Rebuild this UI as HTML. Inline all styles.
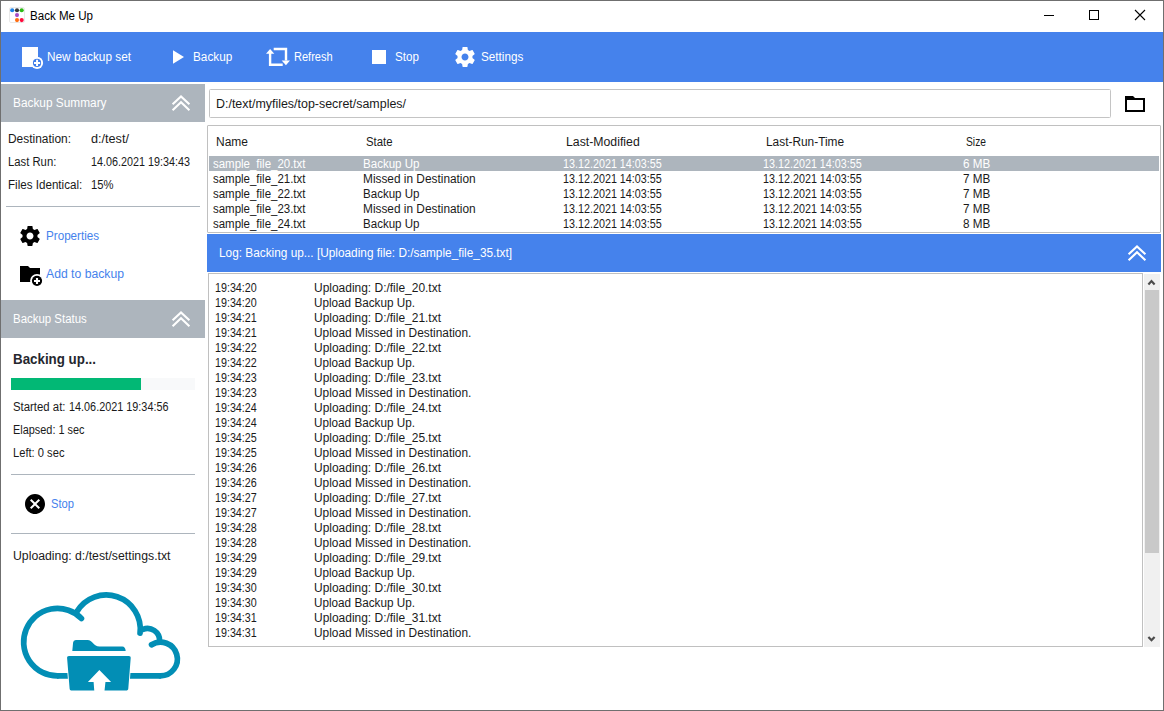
<!DOCTYPE html>
<html lang="en">
<head>
<meta charset="utf-8">
<title>Back Me Up</title>
<style>
html,body{margin:0;padding:0;}
body{width:1164px;height:711px;overflow:hidden;background:#fff;position:relative;
 font-family:"Liberation Sans",sans-serif;font-size:12px;color:#1a1a1a;}
#win{position:absolute;left:0;top:0;width:1162px;height:709px;border:1px solid #6f6f6f;background:#fff;}
.abs{position:absolute;}
.t{position:absolute;white-space:nowrap;line-height:16px;font-size:12px;transform-origin:0 0;}
.w{color:#fff;}
.hdr{position:absolute;left:1px;width:204px;height:38px;background:#adb5bd;}
.hr{position:absolute;height:1px;background:#adb5bd;}
.link{color:#4582ec;}
.sel{position:absolute;left:209px;top:156px;width:950px;height:15px;background:#adb5bd;}
</style>
</head>
<body>
<div id="win"></div>
<!-- toolbar -->
<div class="abs" style="left:1px;top:32px;width:1162px;height:50px;background:#4582ec"></div>
<!-- left panel -->
<div class="hdr" style="top:84px"></div>
<div class="hr" style="left:6px;top:206px;width:194px"></div>
<div class="hdr" style="top:300px"></div>
<div class="abs" style="left:11px;top:378px;width:184px;height:12px;background:#f8f9fa"></div>
<div class="abs" style="left:11px;top:378px;width:130px;height:12px;background:#02b875"></div>
<div class="hr" style="left:11px;top:474px;width:184px"></div>
<div class="hr" style="left:11px;top:533px;width:184px"></div>
<!-- path input -->
<div class="abs" style="left:209px;top:89px;width:900px;height:27px;border:1px solid #c4c4c4;border-radius:1.5px;background:#fff"></div>
<!-- table -->
<div class="abs" style="left:207px;top:125px;width:952px;height:106px;border:1px solid #c0c0c0;border-radius:1px;background:#fff"></div>
<div class="sel"></div>
<!-- log -->
<div class="abs" style="left:207px;top:234px;width:954px;height:38px;background:#4582ec"></div>
<div class="abs" style="left:208px;top:273px;width:933px;height:372px;border:1px solid #c0c0c0;background:#fff"></div>
<div class="abs" style="left:1144px;top:274px;width:16px;height:373px;background:#f0f0f0"></div>
<div class="abs" style="left:1145px;top:290px;width:14px;height:263px;background:#c9c9c9"></div>
<!-- icons -->
<svg class="abs" style="left:9px;top:7px" width="16" height="16" viewBox="0 0 16 16">
 <rect x="0.5" y="0.5" width="15" height="15" rx="1.5" fill="#fff" stroke="#e9e9e9"/>
 <circle cx="3.200" cy="3.250" r="2.050" fill="#1e84e8"/><circle cx="8" cy="3.250" r="2.050" fill="#37383a"/><circle cx="12.700" cy="3.250" r="2.050" fill="#2eb916"/>
 <circle cx="8" cy="8.100" r="2.050" fill="#a64dc8"/>
 <circle cx="8" cy="13.100" r="2.050" fill="#ff6d10"/><circle cx="12.700" cy="13.100" r="2.050" fill="#ff0a3c"/>
</svg>
<svg class="abs" style="left:1040px;top:5px" width="115" height="22" viewBox="0 0 115 22">
 <path d="M4 10.5H14" stroke="#000" stroke-width="1" fill="none"/>
 <rect x="49.5" y="5.5" width="9" height="9" stroke="#000" stroke-width="1" fill="none"/>
 <path d="M95 5L105 15M105 5L95 15" stroke="#000" stroke-width="1.1" fill="none"/>
</svg>
<!-- toolbar icons (coordinates are page pixels) -->
<svg class="abs" style="left:0;top:32px" width="600" height="50" viewBox="0 32 600 50">
 <!-- new backup set -->
 <rect x="22" y="47" width="16" height="20" fill="#fff"/>
 <circle cx="37.050" cy="62.900" r="6.050" fill="#fff"/>
 <circle cx="37.050" cy="62.900" r="4.100" fill="#3f7dea"/>
 <path d="M34 62.900H40.100M37.050 59.850V65.950" stroke="#fff" stroke-width="2" fill="none"/>
 <!-- play -->
 <path d="M173 50.2V63.8L184 57z" fill="#fff"/>
 <!-- refresh -->
 <path d="M270.1 53V64.7H282.7" stroke="#fff" stroke-width="2.4" fill="none"/>
 <path d="M270.1 49L266 53.8H274.3z" fill="#fff"/>
 <path d="M273.7 49H286V60.6" stroke="#fff" stroke-width="2.4" fill="none"/>
 <path d="M285.9 65.3L281.7 60.4H290z" fill="#fff"/>
 <!-- stop -->
 <rect x="372" y="50" width="14" height="14" fill="#fff"/>
 <!-- settings gear -->
 <g transform="translate(453 45)" fill="#fff"><path d="M19.43 12.98c.04-.32.07-.64.07-.98s-.03-.66-.07-.98l2.11-1.65c.19-.15.24-.42.12-.64l-2-3.46c-.12-.22-.39-.3-.61-.22l-2.49 1c-.52-.4-1.08-.73-1.69-.98l-.38-2.65C14.46 2.18 14.25 2 14 2h-4c-.25 0-.46.18-.49.42l-.38 2.65c-.61.25-1.17.59-1.69.98l-2.49-1c-.23-.09-.49 0-.61.22l-2 3.46c-.13.22-.07.49.12.64l2.11 1.65c-.04.32-.07.65-.07.98s.03.66.07.98l-2.11 1.65c-.19.15-.24.42-.12.64l2 3.46c.12.22.39.3.61.22l2.49-1c.52.4 1.08.73 1.69.98l.38 2.65c.03.24.24.42.49.42h4c.25 0 .46-.18.49-.42l.38-2.65c.61-.25 1.17-.59 1.69-.98l2.49 1c.23.09.49 0 .61-.22l2-3.46c.12-.22.07-.49-.12-.64l-2.11-1.65zM12 15.5c-1.93 0-3.5-1.57-3.5-3.5s1.57-3.5 3.5-3.5 3.5 1.57 3.5 3.5-1.57 3.5-3.5 3.5z"/></g>
</svg>
<!-- left panel icons -->
<svg class="abs" style="left:0;top:84px" width="206" height="627" viewBox="0 84 206 627">
 <!-- chevrons -->
 <g stroke="#fff" stroke-width="2.1" fill="none">
  <path d="M172.6 104.3L181 96.4L189.4 104.3"/><path d="M172.6 110.2L181 102.3L189.4 110.2"/>
  <path d="M172.6 320.3L181 312.4L189.4 320.3"/><path d="M172.6 326.2L181 318.3L189.4 326.2"/>
 </g>
 <!-- properties gear -->
 <g transform="translate(18 224)" fill="#000"><path d="M19.43 12.98c.04-.32.07-.64.07-.98s-.03-.66-.07-.98l2.11-1.65c.19-.15.24-.42.12-.64l-2-3.46c-.12-.22-.39-.3-.61-.22l-2.49 1c-.52-.4-1.08-.73-1.69-.98l-.38-2.65C14.46 2.18 14.25 2 14 2h-4c-.25 0-.46.18-.49.42l-.38 2.65c-.61.25-1.17.59-1.69.98l-2.49-1c-.23-.09-.49 0-.61.22l-2 3.46c-.13.22-.07.49.12.64l2.11 1.65c-.04.32-.07.65-.07.98s.03.66.07.98l-2.11 1.65c-.19.15-.24.42-.12.64l2 3.46c.12.22.39.3.61.22l2.49-1c.52.4 1.08.73 1.69.98l.38 2.65c.03.24.24.42.49.42h4c.25 0 .46-.18.49-.42l.38-2.65c.61-.25 1.17-.59 1.69-.98l2.49 1c.23.09.49 0 .61-.22l2-3.46c.12-.22.07-.49-.12-.64l-2.11-1.65zM12 15.500c-1.93 0-3.5-1.57-3.5-3.5s1.57-3.5 3.5-3.5 3.5 1.57 3.5 3.5-1.57 3.5-3.5 3.5z"/></g>
 <!-- add to backup -->
 <path d="M20 266H28L30 268H40V282H20z" fill="#000"/>
 <circle cx="37" cy="280.850" r="6.950" fill="#fff"/>
 <circle cx="37" cy="280.850" r="5.100" fill="#000"/>
 <path d="M34 280.950H40M37 277.950V283.950" stroke="#fff" stroke-width="2.1" fill="none"/>
 <!-- stop/cancel -->
 <g transform="translate(23 492)"><path d="M12 2C6.47 2 2 6.47 2 12s4.470 10 10 10 10-4.470 10-10S17.530 2 12 2zm5 13.590L15.590 17 12 13.410 8.410 17 7 15.590 10.590 12 7 8.410 8.410 7 12 10.590 15.590 7 17 8.410 13.410 12 17 15.590z" fill="#000"/></g>
 <!-- cloud -->
 <g fill="none" stroke="#028eb5" stroke-width="5.7" stroke-linecap="round">
  <path d="M57.4 675.85A33.75 33.75 0 1 1 81.430 618.400"/>
  <path d="M76.800 611.800A34.100 34.100 0 0 1 140.050 633.200"/>
  <path d="M143 629.300A12.100 12.100 0 0 1 159.600 640.500"/>
  <path d="M151.550 644.720A16.850 16.850 0 1 1 160.500 675.850"/>
 </g>
 <path d="M57 675.85H72M126 675.85H160.800" fill="none" stroke="#028eb5" stroke-width="5.7"/>
 <g fill="#028eb5">
  <path d="M72.300 651L73.100 642.400Q73.300 639.900 75.800 639.900H87.500C92.500 639.900 93.500 646.400 99.500 646.400H122.300Q125.300 646.400 125.700 651z"/>
  <path stroke="#fff" stroke-width="1.8" paint-order="stroke" d="M69 655.900H128.800C130.200 655.900 130.800 656.600 130.700 658L128.300 688.600C128.200 690 127.400 690.600 126 690.600H71.900C70.500 690.600 69.700 690 69.600 688.600L67.100 658C67 656.600 67.600 655.900 69 655.900z"/>
 </g>
 <path d="M99.350 669.900L111.100 682.050H105.450L104.500 691H94.300L93.600 682.050H87.900z" fill="#fff"/>
</svg>
<!-- folder button -->
<svg class="abs" style="left:1123px;top:92px" width="24" height="24" viewBox="0 0 24 24"><path d="M2 4H10L12 6H22V20H2zM4 8V18H20V8z" fill="#000" fill-rule="evenodd"/></svg>
<!-- log header chevron + scrollbar arrows -->
<svg class="abs" style="left:1120px;top:234px" width="44" height="416" viewBox="1120 234 44 416">
 <g stroke="#fff" stroke-width="2.1" fill="none">
  <path d="M1128.600 254.300L1137 246.400L1145.400 254.300"/><path d="M1128.600 260.200L1137 252.300L1145.400 260.200"/>
 </g>
 <g stroke="#4b4b4b" stroke-width="2.2" fill="none">
  <path d="M1148.400 284.400L1151.500 281.100L1154.600 284.400"/>
  <path d="M1148.400 636.900L1151.500 640.200L1154.600 636.900"/>
 </g>
</svg>

<!-- text -->
<span class="t" style="left:30px;top:8px;transform:scaleX(0.9639);color:#000;">Back Me Up</span>
<span class="t w" style="left:47px;top:49px;transform:scaleX(0.9837);">New backup set</span>
<span class="t w" style="left:193px;top:49px;transform:scaleX(0.9805);">Backup</span>
<span class="t w" style="left:294px;top:49px;transform:scaleX(0.9207);">Refresh</span>
<span class="t w" style="left:395px;top:49px;transform:scaleX(0.9681);">Stop</span>
<span class="t w" style="left:481px;top:49px;transform:scaleX(0.9756);">Settings</span>
<span class="t w" style="left:13px;top:95px;transform:scaleX(0.9873);">Backup Summary</span>
<span class="t" style="left:8px;top:131px;transform:scaleX(0.9941);">Destination:</span>
<span class="t" style="left:91px;top:131px;transform:scaleX(1.0546);">d:/test/</span>
<span class="t" style="left:8px;top:154px;transform:scaleX(0.9401);">Last Run:</span>
<span class="t" style="left:91px;top:154px;transform:scaleX(0.8991);">14.06.2021 19:34:43</span>
<span class="t" style="left:8px;top:177px;transform:scaleX(0.9680);">Files Identical:</span>
<span class="t" style="left:91px;top:177px;transform:scaleX(0.9363);">15%</span>
<span class="t link" style="left:46px;top:228px;transform:scaleX(0.9707);">Properties</span>
<span class="t link" style="left:46px;top:266px;transform:scaleX(1.0165);">Add to backup</span>
<span class="t w" style="left:13px;top:311px;transform:scaleX(0.9530);">Backup Status</span>
<span class="t" style="left:13px;top:351px;transform:scaleX(0.9527);font-size:14px;font-weight:bold;color:#25272e;">Backing up...</span>
<span class="t" style="left:13px;top:399px;transform:scaleX(0.9481);">Started at:</span>
<span class="t" style="left:69px;top:399px;transform:scaleX(0.9036);">14.06.2021 19:34:56</span>
<span class="t" style="left:13px;top:422px;transform:scaleX(0.9083);">Elapsed: 1 sec</span>
<span class="t" style="left:13px;top:445px;transform:scaleX(0.9300);">Left: 0 sec</span>
<span class="t link" style="left:51px;top:496px;transform:scaleX(0.9316);">Stop</span>
<span class="t" style="left:13px;top:548px;transform:scaleX(1.0221);">Uploading: d:/test/settings.txt</span>
<span class="t" style="left:216px;top:96px;transform:scaleX(1.0360);">D:/text/myfiles/top-secret/samples/</span>
<span class="t" style="left:216px;top:134px;transform:scaleX(0.9995);">Name</span>
<span class="t" style="left:366px;top:134px;transform:scaleX(0.9454);">State</span>
<span class="t" style="left:566px;top:134px;transform:scaleX(1.0236);">Last-Modified</span>
<span class="t" style="left:766px;top:134px;transform:scaleX(0.9896);">Last-Run-Time</span>
<span class="t" style="left:966px;top:134px;transform:scaleX(0.8568);">Size</span>
<span class="t w" style="left:213px;top:157px;transform:scaleX(0.9562);line-height:15px;">sample_file_20.txt</span>
<span class="t w" style="left:363px;top:157px;transform:scaleX(0.9625);line-height:15px;">Backup Up</span>
<span class="t w" style="left:563px;top:157px;transform:scaleX(0.8968);line-height:15px;">13.12.2021 14:03:55</span>
<span class="t w" style="left:763px;top:157px;transform:scaleX(0.8968);line-height:15px;">13.12.2021 14:03:55</span>
<span class="t w" style="left:963px;top:157px;transform:scaleX(0.9727);line-height:15px;">6 MB</span>
<span class="t" style="left:213px;top:172px;transform:scaleX(0.9562);line-height:15px;">sample_file_21.txt</span>
<span class="t" style="left:363px;top:172px;transform:scaleX(0.9881);line-height:15px;">Missed in Destination</span>
<span class="t" style="left:563px;top:172px;transform:scaleX(0.8968);line-height:15px;">13.12.2021 14:03:55</span>
<span class="t" style="left:763px;top:172px;transform:scaleX(0.8968);line-height:15px;">13.12.2021 14:03:55</span>
<span class="t" style="left:963px;top:172px;transform:scaleX(0.9727);line-height:15px;">7 MB</span>
<span class="t" style="left:213px;top:187px;transform:scaleX(0.9562);line-height:15px;">sample_file_22.txt</span>
<span class="t" style="left:363px;top:187px;transform:scaleX(0.9625);line-height:15px;">Backup Up</span>
<span class="t" style="left:563px;top:187px;transform:scaleX(0.8968);line-height:15px;">13.12.2021 14:03:55</span>
<span class="t" style="left:763px;top:187px;transform:scaleX(0.8968);line-height:15px;">13.12.2021 14:03:55</span>
<span class="t" style="left:963px;top:187px;transform:scaleX(0.9727);line-height:15px;">7 MB</span>
<span class="t" style="left:213px;top:202px;transform:scaleX(0.9562);line-height:15px;">sample_file_23.txt</span>
<span class="t" style="left:363px;top:202px;transform:scaleX(0.9881);line-height:15px;">Missed in Destination</span>
<span class="t" style="left:563px;top:202px;transform:scaleX(0.8968);line-height:15px;">13.12.2021 14:03:55</span>
<span class="t" style="left:763px;top:202px;transform:scaleX(0.8968);line-height:15px;">13.12.2021 14:03:55</span>
<span class="t" style="left:963px;top:202px;transform:scaleX(0.9727);line-height:15px;">7 MB</span>
<span class="t" style="left:213px;top:217px;transform:scaleX(0.9562);line-height:15px;">sample_file_24.txt</span>
<span class="t" style="left:363px;top:217px;transform:scaleX(0.9625);line-height:15px;">Backup Up</span>
<span class="t" style="left:563px;top:217px;transform:scaleX(0.8968);line-height:15px;">13.12.2021 14:03:55</span>
<span class="t" style="left:763px;top:217px;transform:scaleX(0.8968);line-height:15px;">13.12.2021 14:03:55</span>
<span class="t" style="left:963px;top:217px;transform:scaleX(0.9727);line-height:15px;">8 MB</span>
<span class="t w" style="left:219px;top:245px;transform:scaleX(0.9852);">Log: Backing up... [Uploading file: D:/sample_file_35.txt]</span>
<span class="t" style="left:215px;top:281px;transform:scaleX(0.8936);line-height:15px;">19:34:20</span>
<span class="t" style="left:314px;top:281px;transform:scaleX(0.9968);line-height:15px;">Uploading: D:/file_20.txt</span>
<span class="t" style="left:215px;top:296px;transform:scaleX(0.8936);line-height:15px;">19:34:20</span>
<span class="t" style="left:314px;top:296px;transform:scaleX(0.9767);line-height:15px;">Upload Backup Up.</span>
<span class="t" style="left:215px;top:311px;transform:scaleX(0.8936);line-height:15px;">19:34:21</span>
<span class="t" style="left:314px;top:311px;transform:scaleX(0.9968);line-height:15px;">Uploading: D:/file_21.txt</span>
<span class="t" style="left:215px;top:326px;transform:scaleX(0.8936);line-height:15px;">19:34:21</span>
<span class="t" style="left:314px;top:326px;transform:scaleX(0.9915);line-height:15px;">Upload Missed in Destination.</span>
<span class="t" style="left:215px;top:341px;transform:scaleX(0.8936);line-height:15px;">19:34:22</span>
<span class="t" style="left:314px;top:341px;transform:scaleX(0.9968);line-height:15px;">Uploading: D:/file_22.txt</span>
<span class="t" style="left:215px;top:356px;transform:scaleX(0.8936);line-height:15px;">19:34:22</span>
<span class="t" style="left:314px;top:356px;transform:scaleX(0.9767);line-height:15px;">Upload Backup Up.</span>
<span class="t" style="left:215px;top:371px;transform:scaleX(0.8936);line-height:15px;">19:34:23</span>
<span class="t" style="left:314px;top:371px;transform:scaleX(0.9968);line-height:15px;">Uploading: D:/file_23.txt</span>
<span class="t" style="left:215px;top:386px;transform:scaleX(0.8936);line-height:15px;">19:34:23</span>
<span class="t" style="left:314px;top:386px;transform:scaleX(0.9915);line-height:15px;">Upload Missed in Destination.</span>
<span class="t" style="left:215px;top:401px;transform:scaleX(0.8936);line-height:15px;">19:34:24</span>
<span class="t" style="left:314px;top:401px;transform:scaleX(0.9968);line-height:15px;">Uploading: D:/file_24.txt</span>
<span class="t" style="left:215px;top:416px;transform:scaleX(0.8936);line-height:15px;">19:34:24</span>
<span class="t" style="left:314px;top:416px;transform:scaleX(0.9767);line-height:15px;">Upload Backup Up.</span>
<span class="t" style="left:215px;top:431px;transform:scaleX(0.8936);line-height:15px;">19:34:25</span>
<span class="t" style="left:314px;top:431px;transform:scaleX(0.9968);line-height:15px;">Uploading: D:/file_25.txt</span>
<span class="t" style="left:215px;top:446px;transform:scaleX(0.8936);line-height:15px;">19:34:25</span>
<span class="t" style="left:314px;top:446px;transform:scaleX(0.9915);line-height:15px;">Upload Missed in Destination.</span>
<span class="t" style="left:215px;top:461px;transform:scaleX(0.8936);line-height:15px;">19:34:26</span>
<span class="t" style="left:314px;top:461px;transform:scaleX(0.9968);line-height:15px;">Uploading: D:/file_26.txt</span>
<span class="t" style="left:215px;top:476px;transform:scaleX(0.8936);line-height:15px;">19:34:26</span>
<span class="t" style="left:314px;top:476px;transform:scaleX(0.9915);line-height:15px;">Upload Missed in Destination.</span>
<span class="t" style="left:215px;top:491px;transform:scaleX(0.8936);line-height:15px;">19:34:27</span>
<span class="t" style="left:314px;top:491px;transform:scaleX(0.9968);line-height:15px;">Uploading: D:/file_27.txt</span>
<span class="t" style="left:215px;top:506px;transform:scaleX(0.8936);line-height:15px;">19:34:27</span>
<span class="t" style="left:314px;top:506px;transform:scaleX(0.9915);line-height:15px;">Upload Missed in Destination.</span>
<span class="t" style="left:215px;top:521px;transform:scaleX(0.8936);line-height:15px;">19:34:28</span>
<span class="t" style="left:314px;top:521px;transform:scaleX(0.9968);line-height:15px;">Uploading: D:/file_28.txt</span>
<span class="t" style="left:215px;top:536px;transform:scaleX(0.8936);line-height:15px;">19:34:28</span>
<span class="t" style="left:314px;top:536px;transform:scaleX(0.9915);line-height:15px;">Upload Missed in Destination.</span>
<span class="t" style="left:215px;top:551px;transform:scaleX(0.8936);line-height:15px;">19:34:29</span>
<span class="t" style="left:314px;top:551px;transform:scaleX(0.9968);line-height:15px;">Uploading: D:/file_29.txt</span>
<span class="t" style="left:215px;top:566px;transform:scaleX(0.8936);line-height:15px;">19:34:29</span>
<span class="t" style="left:314px;top:566px;transform:scaleX(0.9767);line-height:15px;">Upload Backup Up.</span>
<span class="t" style="left:215px;top:581px;transform:scaleX(0.8936);line-height:15px;">19:34:30</span>
<span class="t" style="left:314px;top:581px;transform:scaleX(0.9968);line-height:15px;">Uploading: D:/file_30.txt</span>
<span class="t" style="left:215px;top:596px;transform:scaleX(0.8936);line-height:15px;">19:34:30</span>
<span class="t" style="left:314px;top:596px;transform:scaleX(0.9767);line-height:15px;">Upload Backup Up.</span>
<span class="t" style="left:215px;top:611px;transform:scaleX(0.8936);line-height:15px;">19:34:31</span>
<span class="t" style="left:314px;top:611px;transform:scaleX(0.9968);line-height:15px;">Uploading: D:/file_31.txt</span>
<span class="t" style="left:215px;top:626px;transform:scaleX(0.8936);line-height:15px;">19:34:31</span>
<span class="t" style="left:314px;top:626px;transform:scaleX(0.9915);line-height:15px;">Upload Missed in Destination.</span>
</body>
</html>
